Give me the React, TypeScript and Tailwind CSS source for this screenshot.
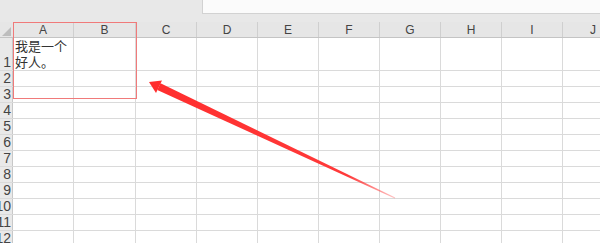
const cols = ["A", "B", "C", "D", "E", "F", "G", "H", "I", "J"]
const rows = [1, 2, 3, 4, 5, 6, 7, 8, 9, 10, 11, 12]

const label = { fontFamily: '"Liberation Sans", Arial, sans-serif' }
const cjk = { fontFamily: '"Liberation Sans", "Noto Sans CJK SC", sans-serif' }

function Row({ n }: { n: number }) {
  const tall = n === 1
  return (
    <div className={`flex ${tall ? "h-[33px]" : "h-[16px]"} border-b border-[#dadada] box-border`}>
      <div
        className="w-[13px] shrink-0 flex justify-end items-end overflow-hidden bg-[#e9e9e9] border-r border-[#c8c8c8] text-[14px] leading-[15px] text-[#444]"
        style={label}
      >
        <span className="pr-[1px]">{n}</span>
      </div>
      {cols.map((c, i) => (
        <div
          key={c}
          className={`shrink-0 ${i === 1 ? "w-[62px]" : "w-[61px]"} border-r border-[#dadada] box-border relative`}
        >
          {tall && i === 0 && (
            <div className="absolute left-[2px] top-[1px] text-[13px] leading-[16px] text-[#333] whitespace-nowrap" style={cjk}>
              我是一个
              <br />
              好人。
            </div>
          )}
        </div>
      ))}
    </div>
  )
}

export default function App() {
  return (
    <div className="relative w-[600px] h-[243px] overflow-hidden bg-white">
      {/* formula area */}
      <div className="h-[22px] bg-[#e8e8e8] flex">
        <div className="ml-[202px] flex-1 h-[14px] bg-[#fbfbfb] border-l border-b border-[#d2d2d2]" />
      </div>

      {/* column headers */}
      <div className="flex h-[16px] bg-[#e6e6e6] border-b border-[#c4c4c4] box-border">
        <div className="w-[13px] shrink-0 relative">
          <svg width="13" height="16" className="absolute left-0 top-0">
            <polygon points="2,14 11,14 11,5" fill="#bdbdbd" />
          </svg>
        </div>
        {cols.map((c, i) => (
          <div
            key={c}
            className={`shrink-0 ${i === 1 ? "w-[62px]" : "w-[61px]"} flex items-center justify-center border-r border-[#cfcfcf] box-border text-[12px] text-[#444]`}
            style={label}
          >
            {c}
          </div>
        ))}
      </div>

      {rows.map((n) => (
        <Row key={n} n={n} />
      ))}

      {/* selection highlight */}
      <div className="absolute left-[13px] top-[22px] w-[124px] h-[77px] border-[1.5px] border-[#f07a7a] pointer-events-none" />

      {/* arrow */}
      <svg className="absolute inset-0 pointer-events-none" width="600" height="243">
        <defs>
          <linearGradient id="fade" x1="159" y1="87" x2="395" y2="198" gradientUnits="userSpaceOnUse">
            <stop offset="0" stopColor="#ff2e2e" />
            <stop offset="0.8" stopColor="#ff3a3a" />
            <stop offset="1" stopColor="#ff3a3a" stopOpacity="0.3" />
          </linearGradient>
        </defs>
        <polygon points="157.3,89.9 160.5,83.3 395.2,197.6 394.8,198.4" fill="url(#fade)" />
        <polygon points="149,82 162,80.6 156,93" fill="#ff2e2e" />
      </svg>
    </div>
  )
}
